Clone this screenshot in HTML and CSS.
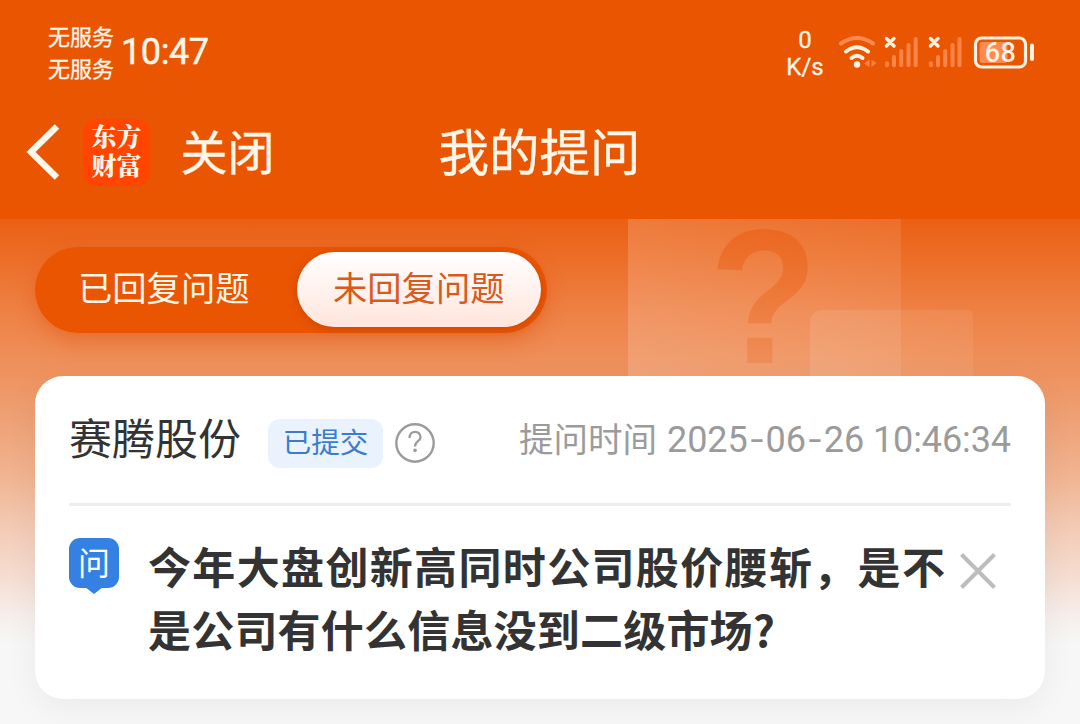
FILE: index.html
```html
<!DOCTYPE html>
<html lang="zh-CN">
<head>
<meta charset="utf-8">
<title>我的提问</title>
<link rel="stylesheet" href="styles.css">
</head>
<body>
<header class="top">
  <div class="status">
    <div class="carriers"><span>无服务</span><span>无服务</span></div>
    <div class="clock">10:47</div>
    <div class="speed"><span>0</span><span>K/s</span></div>
    <svg class="indicators" width="200" height="44" viewBox="836 30 200 44" fill="none" stroke-linecap="round">
      <g stroke="#fff1df" stroke-width="4">
        <path d="M841 43.500Q857 32.500 873 43.500" stroke="#ff8a50"/>
        <path d="M846 51.500Q857 43 868 51.500"/>
        <path d="M851.500 58Q857 53.500 862.500 58"/>
      </g>
      <circle cx="857" cy="64.500" r="3.200" fill="#fff1df"/>
      <path d="M869.500 59.500v7.500L864 63.500zM871.500 59.500v7.500l5-4z" fill="#f98247"/>
      <g stroke="#fb8448" stroke-width="4">
        <path d="M887 63.200v2M894 57v8.200M901.200 51v14.200M908.500 45v20.200M915.700 39v26.200"/>
        <path d="M931 63.200v2M938 57v8.200M945.200 51v14.200M952.500 45v20.200M959.500 39v26.200"/>
      </g>
      <path d="M886.500 38.500l7.500 7.500m0-7.500l-7.500 7.500M930.500 38.500l7.500 7.500m0-7.500l-7.500 7.500" stroke="#fff1df" stroke-width="3.400"/>
      <rect x="979.500" y="42" width="28" height="21" rx="3" fill="#ff8a50"/>
      <rect x="975.500" y="38" width="50" height="29" rx="6" stroke="#fff1df" stroke-width="3.200"/>
      <path d="M1032 45.500v13.500" stroke="#fff1df" stroke-width="4"/>
      <text class="battery" x="1000.500" y="62" text-anchor="middle">68</text>
    </svg>
  </div>
  <nav class="nav">
    <svg class="back" width="34" height="60" viewBox="0 0 34 60" fill="none" stroke="#fff8ee" stroke-width="6.400"><path d="M31 4.500L5 30l26 25.500"/></svg>
    <div class="logo"><span>东方</span><span>财富</span></div>
    <span class="close-page">关闭</span>
    <h1 class="title">我的提问</h1>
  </nav>
</header>
<main class="content">
  <div class="art"><span class="art-mark">?</span></div>
  <div class="art-small"></div>
  <div class="tabs">
    <span class="tab">已回复问题</span>
    <span class="tab tab-active">未回复问题</span>
  </div>
  <section class="card">
    <div class="card-head">
      <span class="stock">赛腾股份</span>
      <span class="badge">已提交</span>
      <svg class="help" width="40" height="40" viewBox="0 0 40 40" fill="none" stroke="#9b9b9b"><circle cx="20" cy="20" r="18.700" stroke-width="2.400"/><path d="M14.500 15C14.500 6.700 25.500 7 25.500 14.200C25.500 18.500 20 18 20 23.500" stroke-width="2.300"/><circle cx="20" cy="27.400" r="1.800" fill="#9b9b9b" stroke="none"/></svg>
      <div class="time"><span class="time-label">提问时间</span><span class="time-value">2025<span class="dash">-</span>06<span class="dash">-</span>26 10:46:34</span></div>
    </div>
    <div class="question">
      <div class="ask"><span>问</span></div>
      <p class="text"><span class="line-a">今年大盘创新高同时公司股价腰斩，是不</span><br><span class="line-b">是公司有什么信息没到二级市场?</span></p>
      <svg class="remove" width="36" height="36" viewBox="0 0 36 36" stroke="#bdbdbd" stroke-width="4"><path d="M1.500 1.500l33 33M34.500 1.500l-33 33"/></svg>
    </div>
  </section>
</main>
</body>
</html>
```
FILE: styles.css
```css
* { box-sizing: border-box; }
body {
  margin: 0;
  width: 1080px;
  height: 724px;
  overflow: hidden;
  background: #f8f8f8;
  font-family: "Noto Sans CJK SC", sans-serif;
}
.top { height: 219px; background: #ea5502; color: #fff5e8; }
.status { height: 104px; display: flex; padding: 20px 0 0 48px; }
.carriers { width: 73px; display: flex; flex-direction: column; margin-top: -1px; font-size: 22px; line-height: 32px; white-space: nowrap; -webkit-text-stroke: .3px; }
.clock { width: 666px; font: 36px/65px Roboto, sans-serif; letter-spacing: -.4px; -webkit-text-stroke: .5px; }
.speed { width: 36px; display: flex; flex-direction: column; align-items: center; margin-top: 7px; font: 24px/27px Roboto, sans-serif; white-space: nowrap; -webkit-text-stroke: .3px; }
.indicators { margin: 10px 0 0 13px; }
.battery { fill: #fff1df; font: 500 27px Roboto, sans-serif; letter-spacing: .5px; }
.nav { height: 96px; display: flex; align-items: center; padding-left: 26px; }
.back { flex: none; }
.logo {
  width: 67px;
  height: 67px;
  margin-left: 23px;
  padding-bottom: 4px;
  border-radius: 14px;
  background: #ff4500;
  display: flex;
  flex-direction: column;
  align-items: center;
  justify-content: center;
  font: 900 25px/29px "Noto Serif CJK SC", "Noto Sans CJK SC", sans-serif;
}
.close-page { width: 258px; margin-left: 30.5px; padding-bottom: 5px; font-size: 47px; line-height: 60px; -webkit-text-stroke: .4px; }
.title { margin: 0; padding-bottom: 6px; font-size: 50.5px; line-height: 60px; font-weight: 400; -webkit-text-stroke: .4px; }
.content {
  position: relative;
  height: 505px;
  padding: 28px 35px 0;
  background: linear-gradient(#ea6014 0, #ec6c25 35px, #ee8246 95px, #ee935f 155px, #efa47a 210px, #f1b593 260px, #f3cbb6 310px, #f5ded3 360px, #f6eeea 395px, #f7f7f7 425px);
}
.art {
  position: absolute;
  left: 628px;
  top: 0;
  width: 273px;
  height: 157px;
  background: linear-gradient(110deg, rgba(255,255,255,.17), rgba(255,255,255,.08));
}
.art-mark {
  position: absolute;
  left: 77px;
  top: -32px;
  font: bold 192px/220px "Liberation Sans", sans-serif;
  color: transparent;
  background: linear-gradient(rgba(234,92,16,.55) 20%, rgba(234,110,45,.28) 85%);
  background-clip: text;
  -webkit-background-clip: text;
  transform: scaleX(.93);
}
.art-small {
  position: absolute;
  left: 810px;
  top: 91px;
  width: 163px;
  height: 100px;
  border-radius: 12px 6px 0 0;
  background: linear-gradient(110deg, rgba(255,255,255,.1), rgba(255,255,255,.06));
}
.tabs {
  position: relative;
  width: 512px;
  height: 86px;
  border-radius: 43px;
  padding: 5px 6px 6px 0;
  display: flex;
  background: #ea5502;
  box-shadow: 0 8px 20px rgba(225,80,10,.45);
}
.tab { width: 262px; padding-left: 43px; font-size: 34.3px; line-height: 69px; color: #fff5e8; white-space: nowrap; }
.tab-active {
  width: 244px;
  height: 75px;
  padding-left: 36px;
  border-radius: 38px;
  color: #d65b1c;
  background: linear-gradient(#fff, #ffe5dd);
  box-shadow: 0 2px 10px rgba(160,50,0,.4);
}
.card {
  position: relative;
  height: 323px;
  margin-top: 43px;
  padding: 0 34px;
  border-radius: 28px;
  background: #fff;
  box-shadow: 0 8px 34px rgba(0,0,0,.055);
}
.card-head { height: 130px; display: flex; border-bottom: 3px solid #ededed; }
.stock { width: 199px; font-size: 43px; line-height: 121px; color: #333; white-space: nowrap; }
.badge { width: 115px; height: 49px; margin-top: 43px; border-radius: 12px; background: #e9f2fd; color: #3b7ccc; font-size: 28.5px; line-height: 43px; text-align: center; }
.help { margin: 47px 0 0 12px; }
.time { margin-left: auto; display: flex; color: #9b9b9b; line-height: 122px; white-space: nowrap; }
.time-label { font-size: 34.5px; margin-right: 10px; }
.time-value { font: 36px/128px Roboto, sans-serif; letter-spacing: -.1px; }
.dash { display: inline-block; width: 18px; text-align: center; transform: scaleX(1.3); }
.question { display: flex; padding-top: 32px; }
.ask {
  position: relative;
  width: 50px;
  height: 50px;
  border-radius: 11px;
  background: #3480e3;
  color: #fff;
  font-size: 32px;
  line-height: 47px;
  text-align: center;
}
.ask::after {
  content: "";
  position: absolute;
  left: 16px;
  top: 49px;
  border: solid transparent;
  border-width: 7px 9px 0;
  border-top-color: #3480e3;
}
.text { width: 812px; margin: -4px 0 0 29px; font-size: 43px; line-height: 63px; font-weight: 700; color: #333; white-space: nowrap; }
.line-a { letter-spacing: 1.35px; }
.line-b { letter-spacing: .2px; }
.remove { margin-top: 15px; }
```
